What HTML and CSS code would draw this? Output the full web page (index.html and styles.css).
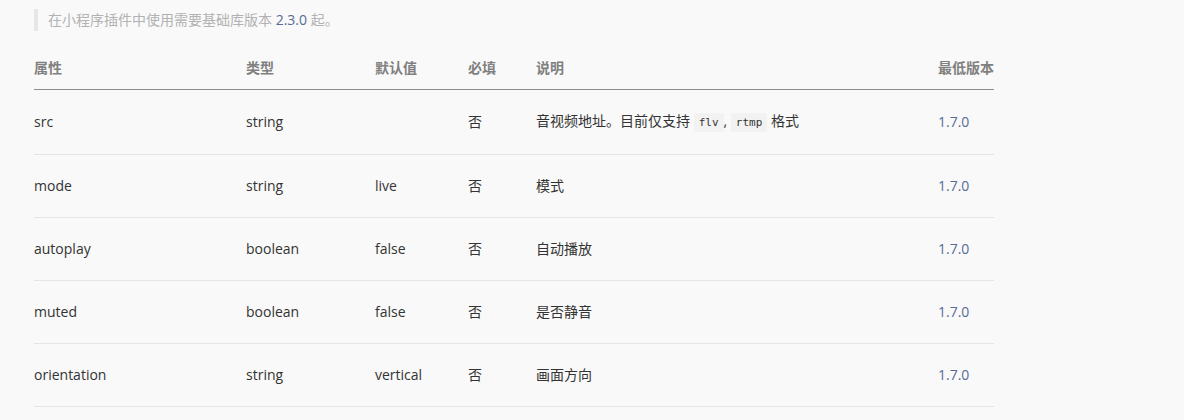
FILE: index.html
```html
<!DOCTYPE html>
<html lang="zh-CN">
<head>
<meta charset="utf-8">
<link rel="stylesheet" href="styles.css">
</head>
<body>
<div class="page">
  <p class="tip">在小程序插件中使用需要基础库版本 <a class="ver-link">2.3.0</a> 起。</p>
  <table class="props">
    <colgroup>
      <col class="c1"><col class="c2"><col class="c3"><col class="c4"><col class="c5"><col class="c6">
    </colgroup>
    <thead>
      <tr><th>属性</th><th>类型</th><th>默认值</th><th>必填</th><th>说明</th><th>最低版本</th></tr>
    </thead>
    <tbody>
      <tr><td>src</td><td>string</td><td></td><td>否</td><td>音视频地址。目前仅支持 <code>flv</code>, <code>rtmp</code> 格式</td><td><a class="ver-link">1.7.0</a></td></tr>
      <tr><td>mode</td><td>string</td><td>live</td><td>否</td><td>模式</td><td><a class="ver-link">1.7.0</a></td></tr>
      <tr><td>autoplay</td><td>boolean</td><td>false</td><td>否</td><td>自动播放</td><td><a class="ver-link">1.7.0</a></td></tr>
      <tr><td>muted</td><td>boolean</td><td>false</td><td>否</td><td>是否静音</td><td><a class="ver-link">1.7.0</a></td></tr>
      <tr><td>orientation</td><td>string</td><td>vertical</td><td>否</td><td>画面方向</td><td><a class="ver-link">1.7.0</a></td></tr>
    </tbody>
  </table>
</div>
</body>
</html>
```

FILE: styles.css
```css
html, body {
  margin: 0;
  background: #f9f9f9;
}
body {
  font-family: "Open Sans", "Noto Sans CJK SC", sans-serif;
  font-size: 14px;
  color: #333;
}
.page {
  padding: 9px 0 0 34px;
  width: 960px;
}
.tip {
  margin: 0;
  border-left: 4px solid #e6e6e6;
  padding-left: 10px;
  line-height: 22px;
  color: #b2b2b2;
}
.ver-link {
  color: #576b95;
  text-decoration: none;
}
.props {
  margin-top: 16px;
  width: 960px;
  table-layout: fixed;
  border-collapse: collapse;
}
.c1 { width: 212px; }
.c2 { width: 129px; }
.c3 { width: 93px; }
.c4 { width: 68px; }
.c5 { width: 402px; }
.c6 { width: 56px; }
.props th {
  text-align: left;
  font-weight: bold;
  color: #808080;
  padding: 10px 0;
  line-height: 22px;
  border-bottom: 1px solid #8c8c8c;
  white-space: nowrap;
}
.props td {
  padding: 20px 0;
  line-height: 22px;
  border-bottom: 1px solid #e5e5e5;
  white-space: nowrap;
}
.props code {
  font-family: "DejaVu Sans Mono", "Liberation Mono", monospace;
  font-size: 11px;
  background: #f2f2f2;
  color: #333;
  padding: 3px 5px;
  border-radius: 2px;
}
```
